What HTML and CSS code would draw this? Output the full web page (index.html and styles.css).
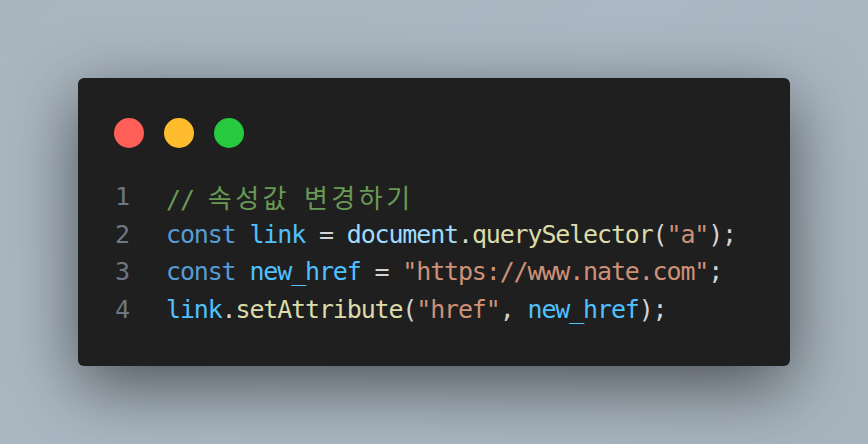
FILE: index.html
```html
<!DOCTYPE html>
<html lang="ko">
<head>
    <meta charset="UTF-8">
    <meta name="viewport" content="width=device-width, initial-scale=1.0">
    <title>Code Snippet</title>
    <link rel="stylesheet" href="styles.css">
</head>
<body>
    <div class="frame">
        <div class="window">
            <div class="controls">
                <span class="dot red"></span>
                <span class="dot yellow"></span>
                <span class="dot green"></span>
            </div>
            <div class="code">
                <div class="line"><span class="num">1</span><span class="src"><span class="cm">// <span class="ko">속성값</span> <span class="ko">변경하기</span></span></span></div>
                <div class="line"><span class="num">2</span><span class="src"><span class="kw">const</span> <span class="var">link</span> <span class="op">=</span> <span class="obj">document</span><span class="op">.</span><span class="fn">querySelector</span><span class="op">(</span><span class="str">"a"</span><span class="op">);</span></span></div>
                <div class="line"><span class="num">3</span><span class="src"><span class="kw">const</span> <span class="var">new_href</span> <span class="op">=</span> <span class="str">"https://www.nate.com"</span><span class="op">;</span></span></div>
                <div class="line"><span class="num">4</span><span class="src"><span class="var">link</span><span class="op">.</span><span class="fn">setAttribute</span><span class="op">(</span><span class="str">"href"</span><span class="op">,</span> <span class="var">new_href</span><span class="op">);</span></span></div>
            </div>
        </div>
    </div>
</body>
</html>
```

FILE: styles.css
```css
body {
    margin: 0;
    padding: 0;
    background-color: #abb8c3;
}
.frame {
    padding: 78px;
    background: linear-gradient(135deg, #a9b5bf 0%, #abb8c3 50%, #a7b3bd 100%);
}
.window {
    background-color: #1f1f1f;
    border-radius: 6px;
    box-shadow: 0 20px 68px rgba(0, 0, 0, 0.55);
    height: 288px;
    box-sizing: border-box;
    padding: 40px 36px 0 36px;
}
.controls {
    display: flex;
    gap: 20px;
    height: 30px;
}
.dot {
    width: 30px;
    height: 30px;
    border-radius: 50%;
}
.red { background-color: #ff5f56; }
.yellow { background-color: #ffbd2e; }
.green { background-color: #27c93f; }

.code {
    margin-top: 30px;
    font-family: "DejaVu Sans Mono", "Noto Sans CJK KR", monospace;
    font-size: 25px;
    letter-spacing: -1.15px;
    line-height: 37.7px;
    color: #d4d4d4;
}
.line {
    display: flex;
    height: 37.7px;
}
.src {
    white-space: pre;
}
.num {
    width: 14px;
    margin-left: 1px;
    margin-right: 37px;
    color: #6e7681;
    text-align: center;
}
.ko {
    font-family: "Noto Sans CJK KR", sans-serif;
    font-size: 26px;
    letter-spacing: 3.5px;
}
.cm { color: #6a9955; }
.kw { color: #569cd6; }
.var { color: #4fc1ff; }
.obj { color: #9cdcfe; }
.fn { color: #dcdcaa; }
.str { color: #ce9178; }
.op { color: #d4d4d4; }
```
